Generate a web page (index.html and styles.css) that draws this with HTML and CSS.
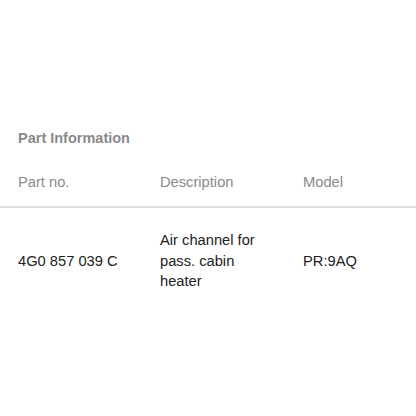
FILE: index.html
```html
<!DOCTYPE html>
<html>
<head>
    <title>Part Information</title>
    <link rel="stylesheet" href="styles.css">
</head>
<body>
    <div class="part-info">
        <h3 class="section-title">Part Information</h3>
        <table class="part-table">
            <thead>
                <tr>
                    <th>Part no.</th>
                    <th>Description</th>
                    <th>Model</th>
                </tr>
            </thead>
            <tbody>
                <tr>
                    <td>4G0 857 039 C</td>
                    <td>Air channel for pass. cabin heater</td>
                    <td>PR:9AQ</td>
                </tr>
            </tbody>
        </table>
    </div>
</body>
</html>
```
FILE: styles.css
```css
body {
    margin: 0;
    font-family: "Liberation Sans", Arial, sans-serif;
    background: #fff;
}

.part-info {
    padding-top: 128px;
}

.section-title {
    margin: 0 0 0 18px;
    font-size: 14.5px;
    font-weight: bold;
    color: #8a8a8a;
    line-height: 20px;
}

.part-table {
    width: 100%;
    border-collapse: collapse;
    margin-top: 15px;
}

.part-table th {
    text-align: left;
    font-weight: normal;
    font-size: 14.7px;
    color: #8a8a8a;
    line-height: 20px;
    padding: 9px 0 14px;
    border-bottom: 2px solid #dedede;
}

.part-table td {
    font-size: 14.7px;
    color: #222;
    line-height: 20.5px;
    padding: 22px 0;
    vertical-align: middle;
}

.part-table th:first-child,
.part-table td:first-child {
    padding-left: 18px;
    width: 142px;
}

.part-table th:nth-child(2) {
    width: 143px;
}

.part-table td:nth-child(2) {
    padding-right: 40px;
    width: 103px;
}
```
